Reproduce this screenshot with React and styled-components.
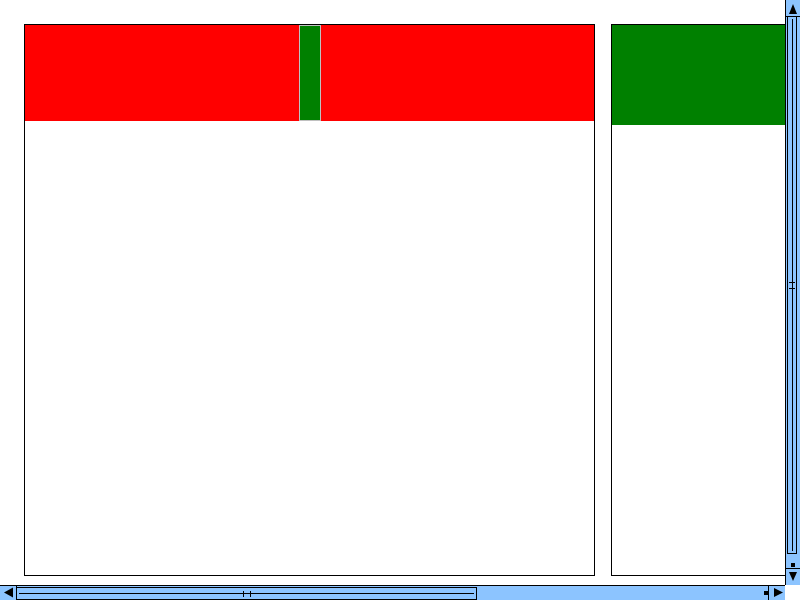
import styled, { createGlobalStyle } from "styled-components";

const Global = createGlobalStyle`
    html, body{
        margin: 0;
        padding: 0;
        background: #ffffff;
        font-family: "Liberation Sans", Arial, sans-serif;
    }
`

const BLUE = "#8cc4ff";

export default function App(){
    return (
        <>
            <Global />
            <Frame>
                <Viewport>
                    <Panel width={571}>
                        <Header height={96} color="#ff0000">
                            <Divider />
                        </Header>
                    </Panel>
                    <Panel width={648}>
                        <Header height={100} color="#008000" />
                    </Panel>
                </Viewport>
                <VScroll>
                    <VButton edge="bottom">
                        <Arrow points="7,3 3,13 11,13" />
                    </VButton>
                    <VTrack>
                        <VThumb style={{ height: 537 }}>
                            <VLine />
                            <VGrip>
                                <HTick />
                                <HTick />
                            </VGrip>
                        </VThumb>
                        <Stop />
                    </VTrack>
                    <VButton edge="top">
                        <Arrow points="3,2 11,2 7,11" />
                    </VButton>
                </VScroll>
                <HScroll>
                    <HButton edge="right">
                        <Arrow points="3,6.5 12,1.5 12,11.5" />
                    </HButton>
                    <HTrack>
                        <HThumb style={{ width: 460 }}>
                            <HLine />
                            <HGrip>
                                <VTick />
                                <VTick />
                            </HGrip>
                        </HThumb>
                        <Stop />
                    </HTrack>
                    <HButton edge="left">
                        <Arrow points="4,2 13,6.5 4,11" />
                    </HButton>
                </HScroll>
                <Corner />
            </Frame>
        </>
    )
}

function Arrow({points}){
    return (
        <svg width="14" height="14" viewBox="0 0 14 14">
            <polygon points={points} fill="#000000" />
        </svg>
    )
}

const Frame = styled.div`
    width: 800px;
    height: 600px;
    display: grid;
    grid-template-columns: 785px 15px;
    grid-template-rows: 585px 15px;
    overflow: hidden;
`
const Viewport = styled.div`
    overflow: hidden;
    padding: 24px 0 0 24px;
    display: flex;
    align-items: flex-start;
    gap: 16px;
`
const Panel = styled.div`
    flex-shrink: 0;
    box-sizing: border-box;
    width: ${p => p.width}px;
    height: 552px;
    border: 1px solid #000000;
    background: #ffffff;
`
const Header = styled.div`
    height: ${p => p.height}px;
    background-color: ${p => p.color};
    display: flex;
    justify-content: center;
`
const Divider = styled.div`
    box-sizing: border-box;
    width: 22px;
    height: 100%;
    background-color: #008000;
    border: 1px solid #c0c0c0;
`
const VScroll = styled.div`
    box-sizing: border-box;
    border-left: 1px solid #000000;
    background: ${BLUE};
    display: flex;
    flex-direction: column;
`
const VButton = styled.div`
    height: 16px;
    flex-shrink: 0;
    border-${p => p.edge}: 1px solid #000000;
    display: flex;
    align-items: center;
    justify-content: center;
    svg{ display: block; }
`
const VTrack = styled.div`
    flex: 1;
    display: flex;
    flex-direction: column;
    justify-content: space-between;
    align-items: center;
    padding-bottom: 1px;
`
const VThumb = styled.div`
    box-sizing: border-box;
    width: 10px;
    margin-left: -2px;
    border: 1px solid #000000;
    border-top: none;
    display: flex;
    justify-content: center;
    align-items: center;
    position: relative;
`
const VLine = styled.div`
    width: 1px;
    height: calc(100% - 4px);
    background: #000000;
`
const VGrip = styled.div`
    position: absolute;
    display: flex;
    flex-direction: column;
    gap: 5px;
`
const HTick = styled.div`
    width: 6px;
    height: 1px;
    background: #000000;
`
const Stop = styled.div`
    width: 4px;
    height: 4px;
    background: #000000;
`
const HScroll = styled.div`
    box-sizing: border-box;
    border-top: 1px solid #000000;
    background: ${BLUE};
    display: flex;
`
const HButton = styled.div`
    width: 16px;
    flex-shrink: 0;
    border-${p => p.edge}: 1px solid #000000;
    display: flex;
    align-items: center;
    justify-content: center;
    svg{ display: block; }
`
const HTrack = styled.div`
    flex: 1;
    display: flex;
    justify-content: space-between;
    align-items: center;
`
const HThumb = styled.div`
    box-sizing: border-box;
    align-self: stretch;
    margin-top: 1px;
    border: 1px solid #000000;
    border-left: none;
    display: flex;
    align-items: center;
    justify-content: center;
    position: relative;
`
const HLine = styled.div`
    height: 1px;
    width: calc(100% - 4px);
    background: #000000;
`
const HGrip = styled.div`
    position: absolute;
    display: flex;
    gap: 6px;
`
const VTick = styled.div`
    width: 1px;
    height: 6px;
    background: #000000;
`
const Corner = styled.div`
    background: #ffffff;
`
